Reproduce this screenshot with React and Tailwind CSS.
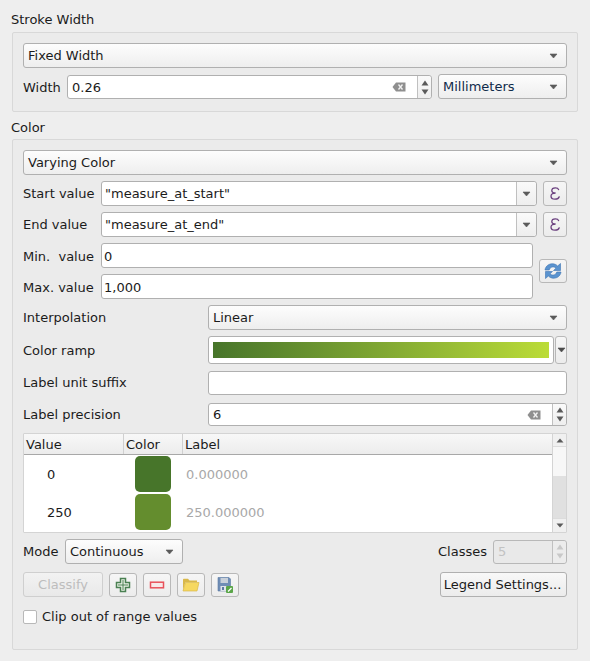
const font = { fontFamily: '"DejaVu Sans", sans-serif' };

function Arrow({ color = "#5a5a5a" }) {
  return (
    <svg width="9" height="6" viewBox="0 0 9 6" className="shrink-0">
      <path d="M1 1 H8 L4.5 5 Z" fill={color} stroke={color} strokeWidth="0.6" strokeLinejoin="round" />
    </svg>
  );
}

function Combo({ text, className = "" }) {
  return (
    <div className={`h-[25px] flex items-center justify-between pl-[4px] pr-[8px] border border-[#b0b0b0] rounded-[3px] bg-gradient-to-b from-[#fdfdfd] to-[#eeeeee] ${className}`}>
      <span>{text}</span>
      <Arrow />
    </div>
  );
}

function Clear() {
  return (
    <svg width="14" height="10" viewBox="0 0 14 10" className="shrink-0">
      <path d="M4 0.5 H13.5 V9.5 H4 L0.5 5 Z" fill="#8f8f8f" />
      <path d="M6.5 2.5 L10.5 7.5 M10.5 2.5 L6.5 7.5" stroke="#f2f2f2" strokeWidth="1.3" />
    </svg>
  );
}

function Spin({ disabled }) {
  const c = disabled ? "#c8c8c8" : "#5a5a5a";
  return (
    <div className={`w-[14px] self-stretch flex flex-col items-center justify-center gap-[3px] border-l border-[#c0c0c0] rounded-r-[3px] ${disabled ? "bg-[#ececec]" : "bg-gradient-to-b from-[#fafafa] to-[#eeeeee]"}`}>
      <svg width="8" height="6" viewBox="0 0 8 6"><path d="M0.5 5.5 H7.5 L4 0.5 Z" fill={c} /></svg>
      <svg width="8" height="6" viewBox="0 0 8 6"><path d="M0.5 0.5 H7.5 L4 5.5 Z" fill={c} /></svg>
    </div>
  );
}

function Input({ text, className = "" }) {
  return (
    <div className={`flex items-center px-[2px] bg-white border border-[#b0b0b0] rounded-[3px] ${className}`}>
      {text}
    </div>
  );
}

function Epsilon() {
  return (
    <div className="w-[24px] h-[25px] flex items-center justify-center border border-[#b8b8b8] rounded-[3px] bg-gradient-to-b from-[#f6f6f6] to-[#ececec]">
      <svg width="10" height="13" viewBox="0 0 10 13" fill="none" stroke="#6a3f7e" strokeWidth="1.3" strokeLinecap="round">
        <path d="M8.6 2.6 C8.2 1.2 6.8 0.8 5.4 0.8 C3.2 0.8 1.8 2 1.8 3.5 C1.8 5 3.2 6 5.6 6 C3 6 1 7.2 1 9 C1 11 2.8 12.2 5 12.2 C7.2 12.2 8.8 11.2 9.2 9.8" />
      </svg>
    </div>
  );
}

function ExprRow({ label, value }) {
  return (
    <div className="mt-[6px] flex items-center">
      <span className="w-[78px] whitespace-pre">{label}</span>
      <div className="w-[436px] h-[25px] flex items-stretch bg-white border border-[#b0b0b0] rounded-[3px]">
        <span className="flex-1 flex items-center pl-[3px]">{value}</span>
        <div className="w-[20px] flex items-center justify-center border-l border-[#c0c0c0] rounded-r-[3px] bg-gradient-to-b from-[#fafafa] to-[#eeeeee]">
          <Arrow />
        </div>
      </div>
      <div className="ml-[6px]"><Epsilon /></div>
    </div>
  );
}

function IconBtn({ children }) {
  return (
    <div className="w-[28px] h-[24px] flex items-center justify-center border border-[#b8b8b8] rounded-[3px] bg-gradient-to-b from-[#f6f6f6] to-[#ececec]">
      {children}
    </div>
  );
}

function Row2({ label, children, className = "", labelClass = "" }) {
  return (
    <div className={`flex items-center ${className}`}>
      <span className={`w-[185px] shrink-0 ${labelClass}`}>{label}</span>
      <div className="flex-1 min-w-0">{children}</div>
    </div>
  );
}

function TableRow({ value, color, label }) {
  return (
    <div className="h-[38px] flex items-center">
      <span className="w-[111px] pl-[23px] pt-[2px]">{value}</span>
      <span className="w-[36px] h-[36px] rounded-[5px]" style={{ backgroundColor: color }} />
      <span className="ml-[15px] pt-[2px] text-[#a8a8a8]">{label}</span>
    </div>
  );
}

export default function App() {
  return (
    <div style={font} className="w-[590px] h-[661px] overflow-hidden bg-[#eeeeee] text-[13px] text-[#1b1b1b] px-[12px] pt-[12px]">
      <div className="h-[16px] leading-[16px] ml-[-1px]">Stroke Width</div>
      <div className="mt-[4px] h-[80px] border border-[#d8d8d8] rounded-[2px] bg-[#ebebeb] pt-[10px] px-[10px]">
        <Combo text="Fixed Width" />
        <div className="mt-[6px] flex items-end">
          <span className="w-[44px] self-center pt-[2px]">Width</span>
          <div className="w-[365px] h-[24px] flex items-center bg-white border border-[#b0b0b0] rounded-[3px]">
            <span className="flex-1 pl-[4px] pt-[2px]">0.26</span>
            <span className="mr-[11px] flex"><Clear /></span>
            <Spin />
          </div>
          <Combo text="Millimeters" className="ml-[6px] flex-1 text-[#0f2a4a]" />
        </div>
      </div>

      <div className="mt-[8px] h-[16px] leading-[16px] ml-[-1px]">Color</div>
      <div className="mt-[3px] h-[511px] border border-[#d8d8d8] rounded-[2px] bg-[#ebebeb] pt-[10px] px-[10px]">
        <Combo text="Varying Color" />
        <ExprRow label="Start value" value={'"measure_at_start"'} />
        <ExprRow label="End value" value={'"measure_at_end"'} />

        <div className="mt-[6px] flex items-center">
          <div className="flex flex-col gap-[6px]">
            <div className="flex items-center">
              <span className="w-[78px] pt-[2px] whitespace-pre">Min.  value</span>
              <Input text="0" className="w-[432px] h-[25px] pt-[2px]" />
            </div>
            <div className="flex items-center">
              <span className="w-[78px] pt-[2px]">Max. value</span>
              <Input text="1,000" className="w-[432px] h-[25px] pt-[2px]" />
            </div>
          </div>
          <div className="ml-[6px]">
            <IconBtn>
              <svg width="20" height="18" viewBox="0 0 20 18">
                <path d="M2 8 C2.5 4 6 1.5 10 1.8 C12 2 13.6 2.8 14.6 4 L17.5 1.5 V8.5 H10.5 L13 6.2 C12 5.2 10.8 4.8 9.6 5 C7.8 5.2 6.6 6.4 6.2 8 Z" fill="#5a93cf" stroke="#3d74b3" strokeWidth="0.6" />
                <path d="M18 10 C17.5 14 14 16.5 10 16.2 C8 16 6.4 15.2 5.4 14 L2.5 16.5 V9.5 H9.5 L7 11.8 C8 12.8 9.2 13.2 10.4 13 C12.2 12.8 13.4 11.6 13.8 10 Z" fill="#5a93cf" stroke="#3d74b3" strokeWidth="0.6" />
              </svg>
            </IconBtn>
          </div>
        </div>

        <Row2 label="Interpolation" className="mt-[6px]"><Combo text="Linear" /></Row2>
        <Row2 label="Color ramp" labelClass="pt-[2px]" className="mt-[6px]">
          <div className="flex gap-[1px] h-[28px]">
            <div className="flex-1 py-[5px] px-[4px] bg-white border border-[#b0b0b0] rounded-[3px]">
              <div className="h-full bg-gradient-to-r from-[#47752a] to-[#bbdc37]" />
            </div>
            <div className="w-[12px] flex items-center justify-center border border-[#b8b8b8] rounded-[3px] bg-gradient-to-b from-[#f6f6f6] to-[#ececec]">
              <Arrow color="#4a4a4a" />
            </div>
          </div>
        </Row2>
        <Row2 label="Label unit suffix" className="mt-[7px]"><Input text="" className="h-[24px]" /></Row2>
        <Row2 label="Label precision" className="mt-[8px]">
          <div className="h-[23px] flex items-center bg-white border border-[#b0b0b0] rounded-[3px]">
            <span className="flex-1 pl-[4px]">6</span>
            <span className="mr-[11px] flex"><Clear /></span>
            <Spin />
          </div>
        </Row2>

        <div className="mt-[7px] h-[100px] flex border border-[#d4d4d4] rounded-[1px] bg-white overflow-hidden">
          <div className="flex-1 min-w-0">
            <div className="h-[21px] flex items-center border-b border-[#a8a8a8] bg-gradient-to-b from-[#f8f8f8] to-[#ececec] text-[#1b1b1b]">
              <span className="w-[100px] pl-[2px] pt-[2px] h-full flex items-center border-r border-[#d0d0d0]">Value</span>
              <span className="w-[59px] pl-[2px] pt-[2px] h-full flex items-center border-r border-[#d0d0d0]">Color</span>
              <span className="pl-[2px] pt-[2px]">Label</span>
            </div>
            <TableRow value="0" color="#47752a" label="0.000000" />
            <TableRow value="250" color="#648d2e" label="250.000000" />
          </div>
          <div className="w-[14px] shrink-0 flex flex-col border-l border-[#d4d4d4] bg-[#e0e0e0]">
            <div className="h-[13px] flex items-center justify-center bg-[#f0f0f0] border-b border-[#dcdcdc]">
              <svg width="8" height="5" viewBox="0 0 8 5"><path d="M0.5 4.5 H7.5 L4 0.5 Z" fill="#5a5a5a" /></svg>
            </div>
            <div className="h-[29px] bg-[#f7f7f7]" />
            <div className="flex-1" />
            <div className="h-[14px] flex items-center justify-center bg-[#f0f0f0] border-t border-[#dcdcdc]">
              <svg width="8" height="5" viewBox="0 0 8 5"><path d="M0.5 0.5 H7.5 L4 4.5 Z" fill="#5a5a5a" /></svg>
            </div>
          </div>
        </div>

        <div className="mt-[6px] flex items-center justify-between">
          <div className="flex items-center">
            <span className="w-[42px]">Mode</span>
            <Combo text="Continuous" className="w-[118px]" />
          </div>
          <div className="flex items-center">
            <span className="mr-[6px]">Classes</span>
            <div className="w-[74px] h-[24px] flex items-center border border-[#b8b8b8] rounded-[3px] bg-[#e9e9e9]">
              <span className="flex-1 pl-[4px] text-[#c2c2c2]">5</span>
              <Spin disabled />
            </div>
          </div>
        </div>

        <div className="mt-[8px] flex items-center justify-between">
          <div className="flex items-center gap-[6px]">
            <div className="w-[80px] h-[25px] flex items-center justify-center border border-[#cfcfcf] rounded-[3px] bg-gradient-to-b from-[#f2f2f2] to-[#e9e9e9] text-[#bdbdbd]">Classify</div>
            <IconBtn>
              <svg width="16" height="16" viewBox="0 0 16 16">
                <path d="M5.5 1.5 H10.5 V5.5 H14.5 V10.5 H10.5 V14.5 H5.5 V10.5 H1.5 V5.5 H5.5 Z" fill="#eef5ea" stroke="#4a8052" strokeWidth="1.5" />
                <path d="M8 3 V13 M3 8 H13" stroke="#4a8052" strokeWidth="1" />
              </svg>
            </IconBtn>
            <IconBtn>
              <svg width="16" height="8" viewBox="0 0 16 8">
                <rect x="1.5" y="1.2" width="13" height="5.6" fill="#f7e8e8" stroke="#e8505a" strokeWidth="1.5" />
              </svg>
            </IconBtn>
            <IconBtn>
              <svg width="18" height="14" viewBox="0 0 18 14">
                <path d="M1 2 C1 1 1.5 0.8 2 0.8 H6 L7.5 2.4 H15 V4 H3.5 L1 12 Z" fill="#d9b84a" />
                <path d="M3.5 4.5 H17 L15 13 H1 Z" fill="#f6d860" stroke="#d9b84a" strokeWidth="0.7" />
              </svg>
            </IconBtn>
            <IconBtn>
              <svg width="16" height="17" viewBox="0 0 16 17">
                <path d="M1 1.5 H12 L13.5 3 V15 H1 Z" fill="#6f8db5" stroke="#5c7aa3" strokeWidth="0.6" />
                <rect x="3.5" y="2" width="7.5" height="5" fill="#c8d0da" />
                <rect x="3.5" y="10" width="7.5" height="5" fill="#e0e4ea" />
                <rect x="5" y="11" width="2" height="3" fill="#5c7aa3" />
                <rect x="9" y="10" width="7" height="7" rx="1" fill="#5aa548" />
                <path d="M11 15.5 L14.5 12" stroke="#fff" strokeWidth="1.3" />
              </svg>
            </IconBtn>
          </div>
          <div className="w-[127px] h-[25px] pr-[2px] flex items-center justify-center border border-[#b0b0b0] rounded-[3px] bg-gradient-to-b from-[#f8f8f8] to-[#ececec]">Legend Settings...</div>
        </div>

        <div className="mt-[10px] flex items-center gap-[5px]">
          <div className="w-[14px] h-[14px] bg-white border border-[#b8b8b8] rounded-[2px]" />
          <span>Clip out of range values</span>
        </div>
      </div>
    </div>
  );
}
